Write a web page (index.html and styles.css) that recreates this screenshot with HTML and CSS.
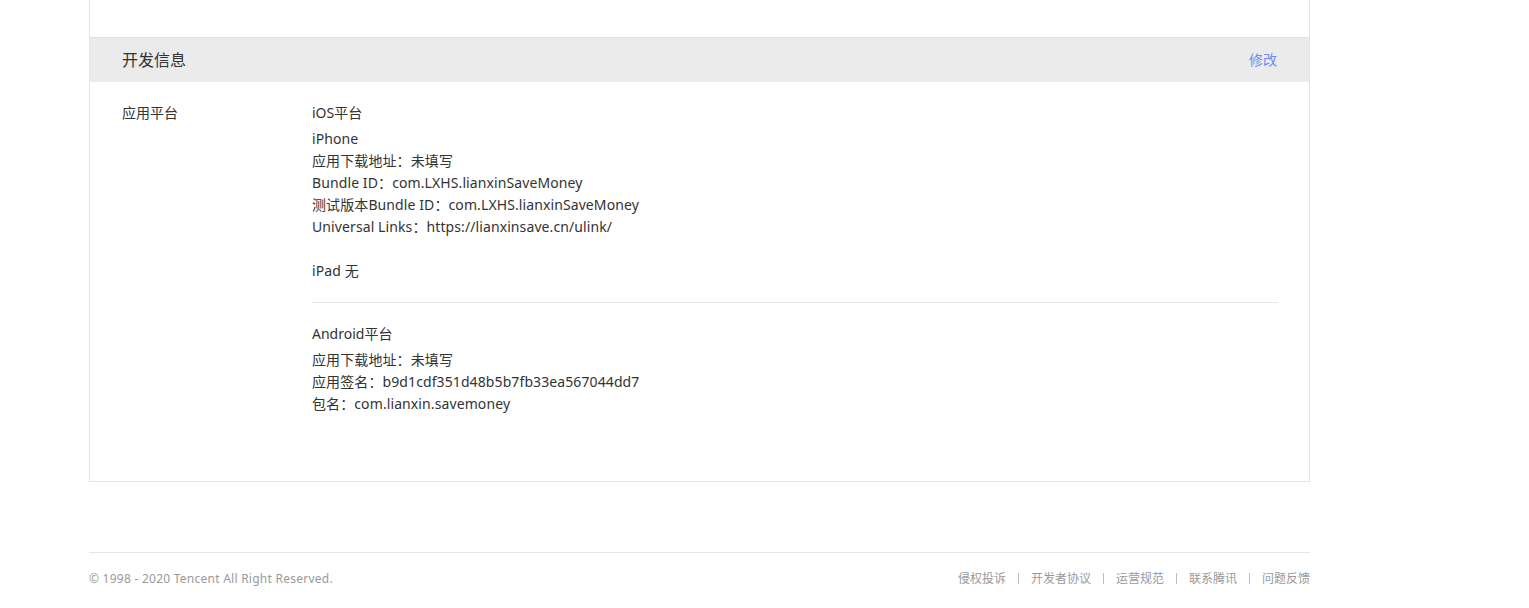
FILE: index.html
```html
<!DOCTYPE html>
<html lang="zh-CN">
<head>
<meta charset="utf-8">
<link rel="stylesheet" href="styles.css">
</head>
<body>
<div class="page">
  <div class="card">
    <div class="card-top"></div>
    <div class="card-head">
      <span class="card-title">开发信息</span>
      <a class="edit">修改</a>
    </div>
    <div class="card-body">
      <div class="label">应用平台</div>
      <div class="value">
        <div class="platform">
          <div class="p-title">iOS平台</div>
          <div class="line">iPhone</div>
          <div class="line">应用下载地址：未填写</div>
          <div class="line">Bundle ID：com.LXHS.lianxinSaveMoney</div>
          <div class="line">测试版本Bundle ID：com.LXHS.lianxinSaveMoney</div>
          <div class="line">Universal Links：https://lianxinsave.cn/ulink/</div>
          <div class="line blank"></div>
          <div class="line">iPad 无</div>
        </div>
        <div class="divider"></div>
        <div class="platform">
          <div class="p-title android">Android平台</div>
          <div class="line">应用下载地址：未填写</div>
          <div class="line">应用签名：b9d1cdf351d48b5b7fb33ea567044dd7</div>
          <div class="line">包名：com.lianxin.savemoney</div>
        </div>
      </div>
    </div>
  </div>
  <div class="footer">
    <span class="copy">© 1998 - 2020 Tencent All Right Reserved.</span>
    <div class="links">
      <a>侵权投诉</a><span class="sep"></span>
      <a>开发者协议</a><span class="sep"></span>
      <a>运营规范</a><span class="sep"></span>
      <a>联系腾讯</a><span class="sep"></span>
      <a>问题反馈</a>
    </div>
  </div>
</div>
</body>
</html>
```

FILE: styles.css
```css
* { box-sizing: border-box; }
html, body { margin: 0; padding: 0; background: #fff; }
body {
  font-family: "Noto Sans", "Noto Sans CJK SC", sans-serif;
  color: #333;
  font-size: 14px;
}
.page { width: 1221px; margin-left: 89px; }
.card {
  border: 1px solid #e4e4e4;
  border-top: none;
}
.card-top { height: 37px; }
.card-head {
  height: 45px;
  border-top: 1px solid #e0e0e0;
  background: #ebebeb;
  display: flex;
  justify-content: space-between;
  align-items: center;
  padding: 0 32px 2px 32px;
}
.card-title { font-size: 16px; color: #333; }
.edit { font-size: 14px; color: #6b8df5; cursor: pointer; }
.card-body {
  display: grid;
  grid-template-columns: 190px 1fr;
  padding: 20px 31px 66px 32px;
  line-height: 22px;
}
.line { height: 22px; letter-spacing: 0.1px; }
.p-title { margin-bottom: 4px; }
.p-title.android { margin-bottom: 4px; }
.divider { height: 1px; background: #e6e6e6; margin: 20px 0 20px; }
.footer {
  margin-top: 70px;
  border-top: 1px solid #e6e6e6;
  display: flex;
  justify-content: space-between;
  align-items: center;
  padding-top: 17px;
  font-size: 12px;
  line-height: 17px;
  color: #999;
}
.copy { letter-spacing: 0.25px; }
.links { display: flex; align-items: center; }
.links a { color: #999; cursor: pointer; }
.sep { width: 1px; height: 11px; background: #bbb; margin: 0 12px; }
```
